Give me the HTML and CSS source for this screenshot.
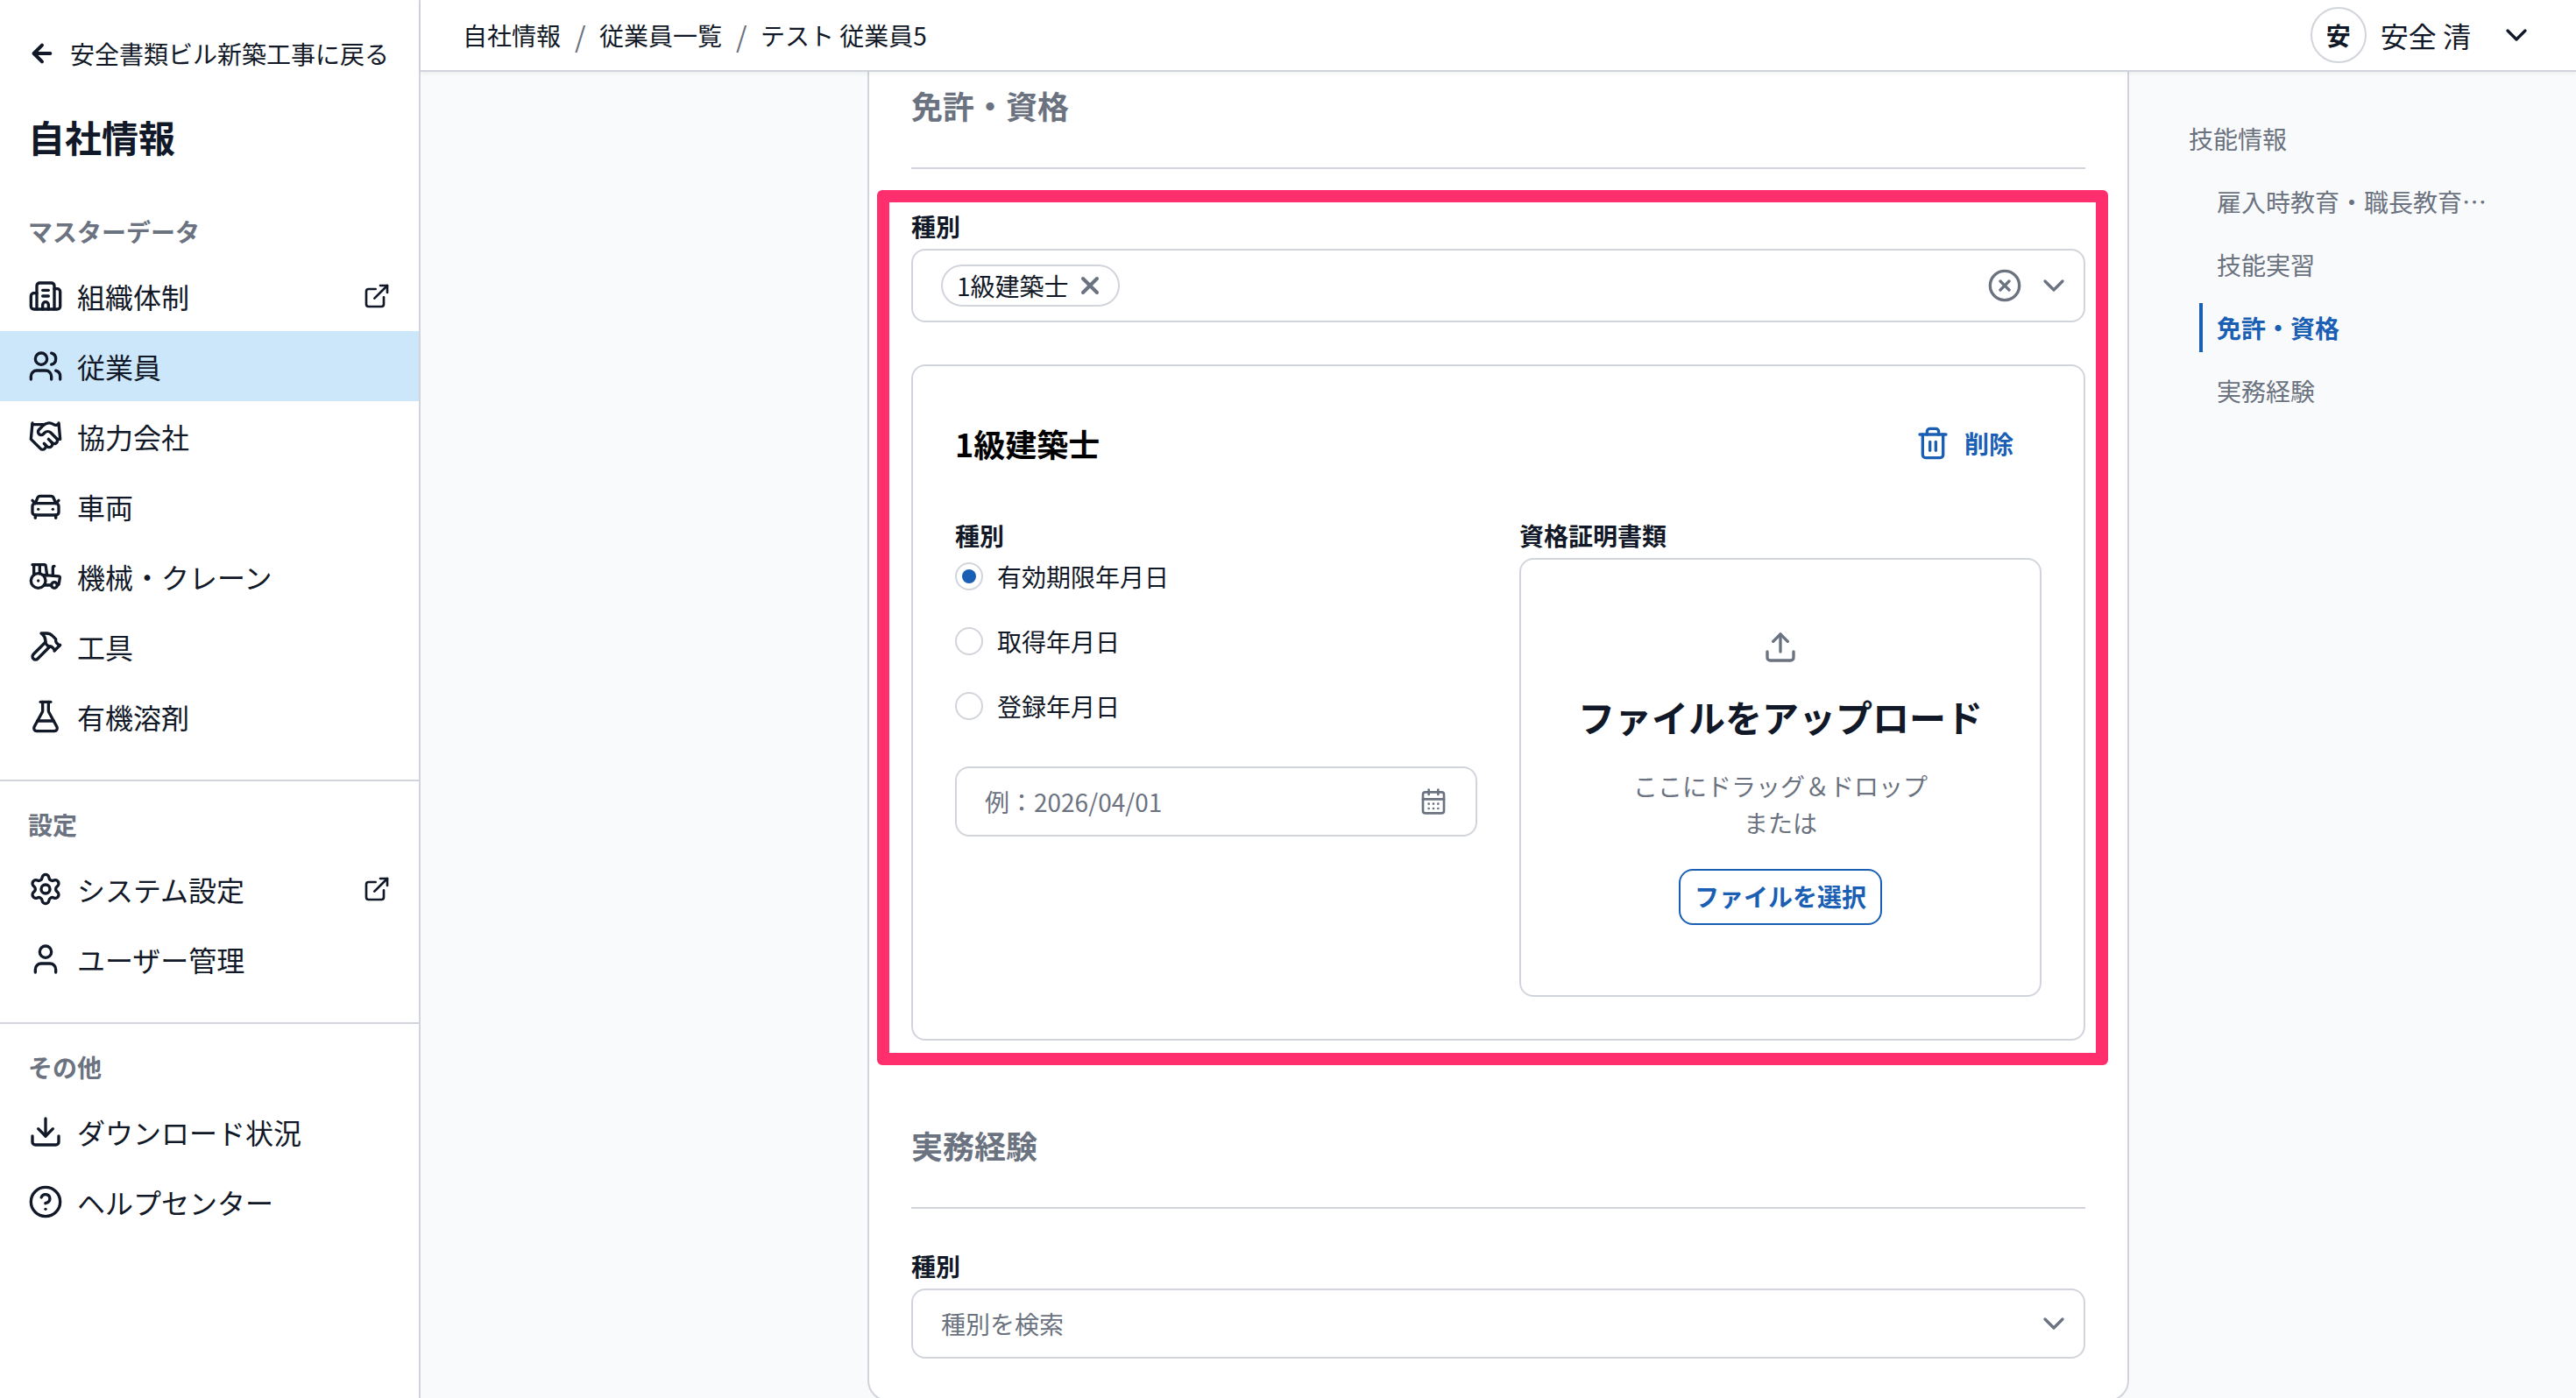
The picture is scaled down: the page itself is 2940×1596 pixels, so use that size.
FILE: index.html
```html
<!DOCTYPE html>
<html lang="ja">
<head>
  <meta charset="UTF-8">
  <meta name="viewport" content="width=device-width, initial-scale=1.0">
  <title>テスト 従業員5 | 自社情報</title>
  <link rel="stylesheet" href="styles.css">
</head>
<body>
  <nav class="sidebar">
    <div class="sidebar-head">
      <a class="back-link">
        <svg class="icon icon-sm icon-bold" viewBox="0 0 24 24"><path d="m12 19-7-7 7-7"/><path d="M19 12H5"/></svg>
        <span>安全書類ビル新築工事に戻る</span>
      </a>
      <h1>自社情報</h1>
    </div>

    <div class="menu-group">
      <p class="menu-label">マスターデータ</p>
      <a class="menu-item">
        <svg class="icon" viewBox="0 0 24 24"><path d="M10 12h4"/><path d="M10 8h4"/><path d="M14 21v-3a2 2 0 0 0-4 0v3"/><path d="M6 10H4a2 2 0 0 0-2 2v7a2 2 0 0 0 2 2h16a2 2 0 0 0 2-2V9a2 2 0 0 0-2-2h-2"/><path d="M6 21V5a2 2 0 0 1 2-2h8a2 2 0 0 1 2 2v16"/></svg>
        <span>組織体制</span>
        <svg class="icon icon-sm external" viewBox="0 0 24 24"><path d="M15 3h6v6"/><path d="M10 14 21 3"/><path d="M18 13v6a2 2 0 0 1-2 2H5a2 2 0 0 1-2-2V8a2 2 0 0 1 2-2h6"/></svg>
      </a>
      <a class="menu-item active">
        <svg class="icon" viewBox="0 0 24 24"><path d="M16 21v-2a4 4 0 0 0-4-4H6a4 4 0 0 0-4 4v2"/><path d="M16 3.128a4 4 0 0 1 0 7.744"/><path d="M22 21v-2a4 4 0 0 0-3-3.87"/><circle cx="9" cy="7" r="4"/></svg>
        <span>従業員</span>
      </a>
      <a class="menu-item">
        <svg class="icon" viewBox="0 0 24 24"><path d="m11 17 2 2a1 1 0 1 0 3-3"/><path d="m14 14 2.5 2.5a1 1 0 1 0 3-3l-3.88-3.88a3 3 0 0 0-4.24 0l-.88.88a1 1 0 1 1-3-3l2.81-2.81a5.79 5.79 0 0 1 7.06-.87l.47.28a2 2 0 0 0 1.42.25L21 4"/><path d="m21 3 1 11h-2"/><path d="M3 3 2 14l6.5 6.5a1 1 0 1 0 3-3"/><path d="M3 4h8"/></svg>
        <span>協力会社</span>
      </a>
      <a class="menu-item">
        <svg class="icon" viewBox="0 0 24 24"><path d="m21 8-2 2-1.5-3.7A2 2 0 0 0 15.646 5H8.4a2 2 0 0 0-1.903 1.257L5 10 3 8"/><path d="M7 14h.01"/><path d="M17 14h.01"/><rect width="18" height="8" x="3" y="10" rx="2"/><path d="M5 18v2"/><path d="M19 18v2"/></svg>
        <span>車両</span>
      </a>
      <a class="menu-item">
        <svg class="icon" viewBox="0 0 24 24"><path d="m10 11 11 .9a1 1 0 0 1 .8 1.1l-.665 4.158a1 1 0 0 1-.988.842H20"/><path d="M16 18h-5"/><path d="M18 5a1 1 0 0 0-1 1v5.573"/><path d="M3 4h8.129a1 1 0 0 1 .99.863L13 11.246"/><path d="M4 11V4"/><path d="M7 15h.01"/><path d="M8 10.1V4"/><circle cx="18" cy="18" r="2"/><circle cx="7" cy="15" r="5"/></svg>
        <span>機械・クレーン</span>
      </a>
      <a class="menu-item">
        <svg class="icon" viewBox="0 0 24 24"><path d="m15 12-8.373 8.373a1 1 0 1 1-3-3L12 9"/><path d="m18 15 4-4"/><path d="m21.5 11.5-1.914-1.914A2 2 0 0 1 19 8.172V7l-2.26-2.26a6 6 0 0 0-4.202-1.756L9 2.96l.92.82A6.18 6.18 0 0 1 12 8.4V10l2 2h1.172a2 2 0 0 1 1.414.586L18.5 14.5"/></svg>
        <span>工具</span>
      </a>
      <a class="menu-item">
        <svg class="icon" viewBox="0 0 24 24"><path d="M14 2v6a2 2 0 0 0 .245.96l5.51 10.08A2 2 0 0 1 18 22H6a2 2 0 0 1-1.755-2.96l5.51-10.08A2 2 0 0 0 10 8V2"/><path d="M6.453 15h11.094"/><path d="M8.5 2h7"/></svg>
        <span>有機溶剤</span>
      </a>
    </div>

    <div class="menu-group">
      <p class="menu-label">設定</p>
      <a class="menu-item">
        <svg class="icon" viewBox="0 0 24 24"><path d="M9.671 4.136a2.34 2.34 0 0 1 4.659 0 2.34 2.34 0 0 0 3.319 1.915 2.34 2.34 0 0 1 2.33 4.033 2.34 2.34 0 0 0 0 3.831 2.34 2.34 0 0 1-2.33 4.033 2.34 2.34 0 0 0-3.319 1.915 2.34 2.34 0 0 1-4.659 0 2.34 2.34 0 0 0-3.32-1.915 2.34 2.34 0 0 1-2.33-4.033 2.34 2.34 0 0 0 0-3.831A2.34 2.34 0 0 1 6.35 6.051a2.34 2.34 0 0 0 3.319-1.915"/><circle cx="12" cy="12" r="3"/></svg>
        <span>システム設定</span>
        <svg class="icon icon-sm external" viewBox="0 0 24 24"><path d="M15 3h6v6"/><path d="M10 14 21 3"/><path d="M18 13v6a2 2 0 0 1-2 2H5a2 2 0 0 1-2-2V8a2 2 0 0 1 2-2h6"/></svg>
      </a>
      <a class="menu-item">
        <svg class="icon" viewBox="0 0 24 24"><path d="M19 21v-2a4 4 0 0 0-4-4H9a4 4 0 0 0-4 4v2"/><circle cx="12" cy="7" r="4"/></svg>
        <span>ユーザー管理</span>
      </a>
    </div>

    <div class="menu-group">
      <p class="menu-label">その他</p>
      <a class="menu-item">
        <svg class="icon" viewBox="0 0 24 24"><path d="M12 15V3"/><path d="M21 15v4a2 2 0 0 1-2 2H5a2 2 0 0 1-2-2v-4"/><path d="m7 10 5 5 5-5"/></svg>
        <span>ダウンロード状況</span>
      </a>
      <a class="menu-item">
        <svg class="icon" viewBox="0 0 24 24"><circle cx="12" cy="12" r="10"/><path d="M9.09 9a3 3 0 0 1 5.83 1c0 2-3 3-3 3"/><path d="M12 17h.01"/></svg>
        <span>ヘルプセンター</span>
      </a>
    </div>
  </nav>

  <div class="page">
    <header class="topbar">
      <div class="breadcrumb">
        <a>自社情報</a>
        <span class="slash">/</span>
        <a>従業員一覧</a>
        <span class="slash">/</span>
        <span>テスト 従業員5</span>
      </div>
      <div class="account">
        <span class="avatar">安</span>
        <span class="account-name">安全 清</span>
        <svg class="icon" viewBox="0 0 24 24"><path d="m6 9 6 6 6-6"/></svg>
      </div>
    </header>

    <div class="content">
      <main class="card">
        <h2>免許・資格</h2>
        <section class="license">
          <label class="field-label">種別</label>
          <div class="select select-multi">
            <span class="chip">1級建築士
              <svg class="icon icon-sm icon-bold" viewBox="0 0 24 24"><path d="M18 6 6 18"/><path d="m6 6 12 12"/></svg>
            </span>
            <div class="select-actions">
              <svg class="icon" viewBox="0 0 24 24"><circle cx="12" cy="12" r="10"/><path d="m15 9-6 6"/><path d="m9 9 6 6"/></svg>
              <svg class="icon" viewBox="0 0 24 24"><path d="m6 9 6 6 6-6"/></svg>
            </div>
          </div>

          <div class="license-card">
            <div class="license-head">
              <h3>1級建築士</h3>
              <button class="delete-button">
                <svg class="icon" viewBox="0 0 24 24"><path d="M3 6h18"/><path d="M19 6v14a2 2 0 0 1-2 2H7a2 2 0 0 1-2-2V6"/><path d="M8 6V4a2 2 0 0 1 2-2h4a2 2 0 0 1 2 2v2"/><path d="M10 11v6"/><path d="M14 11v6"/></svg>
                削除
              </button>
            </div>
            <div class="license-body">
              <div>
                <label class="field-label">種別</label>
                <div class="radio-list">
                  <label class="radio checked"><i></i>有効期限年月日</label>
                  <label class="radio"><i></i>取得年月日</label>
                  <label class="radio"><i></i>登録年月日</label>
                </div>
                <div class="date-input">
                  <span>例：2026/04/01</span>
                  <svg class="icon icon-sm" viewBox="0 0 24 24"><path d="M8 2v4"/><path d="M16 2v4"/><rect width="18" height="18" x="3" y="4" rx="2"/><path d="M3 10h18"/><path d="M8 14h.01"/><path d="M12 14h.01"/><path d="M16 14h.01"/><path d="M8 18h.01"/><path d="M12 18h.01"/><path d="M16 18h.01"/></svg>
                </div>
              </div>
              <div>
                <label class="field-label">資格証明書類</label>
                <div class="upload">
                  <svg class="icon" viewBox="0 0 24 24"><path d="M12 3v12"/><path d="m17 8-5-5-5 5"/><path d="M21 15v4a2 2 0 0 1-2 2H5a2 2 0 0 1-2-2v-4"/></svg>
                  <h4>ファイルをアップロード</h4>
                  <p>ここにドラッグ＆ドロップ<br>または</p>
                  <button class="file-button">ファイルを選択</button>
                </div>
              </div>
            </div>
          </div>
          <div class="highlight"></div>
        </section>

        <h2>実務経験</h2>
        <section>
          <label class="field-label">種別</label>
          <div class="select">
            <span>種別を検索</span>
            <div class="select-actions">
              <svg class="icon" viewBox="0 0 24 24"><path d="m6 9 6 6 6-6"/></svg>
            </div>
          </div>
        </section>
      </main>

      <aside class="toc">
        <a>技能情報</a>
        <a class="sub">雇入時教育・職長教育…</a>
        <a class="sub">技能実習</a>
        <a class="sub current">免許・資格</a>
        <a class="sub">実務経験</a>
      </aside>
    </div>
  </div>
</body>
</html>
```
FILE: styles.css
```css
* {
  box-sizing: border-box;
}
body {
  display: flex;
  height: 1596px;
  margin: 0;
  overflow: hidden;
  font-family: "Noto Sans CJK JP", sans-serif;
  font-size: 28px;
  line-height: 42px;
  color: #111827;
  background-color: #f9fafb;
}
h1, h2, h3, h4, p {
  margin: 0;
}
button {
  font: inherit;
  font-weight: 700;
  color: #1a5fb4;
  background: none;
  border: none;
  cursor: pointer;
}
.icon {
  flex: none;
  display: block;
  width: 40px;
  height: 40px;
  fill: none;
  stroke: currentColor;
  stroke-width: 2;
  stroke-linecap: round;
  stroke-linejoin: round;
}
.icon-sm {
  width: 32px;
  height: 32px;
}
.icon-bold {
  stroke-width: 3;
}

/* sidebar */
.sidebar {
  flex: none;
  width: 480px;
  background-color: #fff;
  border-right: 2px solid #d1d5db;
}
.sidebar-head {
  height: 215px;
  padding: 40px 32px 0;
}
.back-link {
  display: flex;
  align-items: center;
  gap: 16px;
  white-space: nowrap;
}
.sidebar-head h1 {
  margin-top: 43px;
  font-size: 42px;
  line-height: 62px;
}
.menu-group {
  padding: 28px 0 32px;
}
.menu-group + .menu-group {
  border-top: 2px solid #d1d5db;
}
.menu-label {
  margin-bottom: 13px;
  padding: 0 32px;
  font-weight: 700;
  color: #6b7280;
}
.menu-item {
  display: flex;
  align-items: center;
  gap: 16px;
  height: 80px;
  padding: 0 32px;
  font-size: 32px;
}
.menu-item.active {
  background-color: #cce7fa;
}
.external {
  margin-left: auto;
}

/* top bar */
.page {
  flex: 1;
  min-width: 0;
}
.topbar {
  position: relative;
  display: flex;
  align-items: center;
  justify-content: space-between;
  height: 82px;
  padding: 0 48px;
  background-color: #fff;
  border-bottom: 2px solid #d1d5db;
  box-shadow: 0 2px 4px rgba(0, 0, 0, 0.05);
}
.breadcrumb {
  display: flex;
  align-items: center;
  gap: 16px;
}
.slash {
  width: 12px;
  font-size: 32px;
  color: #6b7280;
}
.account {
  display: flex;
  align-items: center;
  gap: 16px;
}
.avatar {
  width: 64px;
  height: 64px;
  border: 2px solid #d1d5db;
  border-radius: 50%;
  font-weight: 700;
  line-height: 60px;
  text-align: center;
}
.account-name {
  margin-right: 16px;
  font-size: 32px;
}

/* form */
.content {
  display: grid;
  grid-template-columns: 1fr 1440px 1fr;
}
.card {
  grid-column: 2;
  height: 1518px;
  padding: 11px 48px 0;
  background-color: #fff;
  border: 2px solid #d1d5db;
  border-top: none;
  border-radius: 0 0 24px 24px;
}
.card h2 {
  margin-bottom: 39px;
  padding-bottom: 44px;
  border-bottom: 2px solid #d1d5db;
  font-size: 36px;
  line-height: 54px;
  color: #6b7280;
}
.field-label {
  display: block;
  font-weight: 700;
  line-height: 52px;
}
.select {
  display: flex;
  align-items: center;
  justify-content: space-between;
  height: 80px;
  padding: 0 14px 0 32px;
  border: 2px solid #d1d5db;
  border-radius: 16px;
  color: #6b7280;
}
.select-multi {
  height: 84px;
}
.select-actions {
  display: flex;
  gap: 16px;
}
.chip {
  display: flex;
  align-items: center;
  gap: 8px;
  height: 48px;
  padding: 0 16px;
  border: 2px solid #d1d5db;
  border-radius: 24px;
  color: #111827;
}
.chip .icon {
  color: #6b7280;
}
.license {
  position: relative;
  margin-bottom: 92px;
}
.license-card {
  height: 772px;
  margin-top: 48px;
  padding: 56px 48px 0;
  border: 2px solid #d1d5db;
  border-radius: 16px;
}
.license-head {
  display: flex;
  align-items: center;
  justify-content: space-between;
  height: 64px;
  margin-bottom: 47px;
}
.license-head h3 {
  font-size: 36px;
  color: #000;
}
.delete-button {
  display: flex;
  align-items: center;
  gap: 16px;
  padding: 0 32px;
}
.license-body {
  display: grid;
  grid-template-columns: 1fr 1fr;
  gap: 48px;
}
.radio-list {
  display: flex;
  flex-direction: column;
  gap: 42px;
  padding: 5px 0 53px;
}
.radio {
  display: flex;
  align-items: center;
  gap: 16px;
  height: 32px;
}
.radio i {
  display: flex;
  align-items: center;
  justify-content: center;
  width: 32px;
  height: 32px;
  border: 2px solid #d1d5db;
  border-radius: 50%;
}
.radio.checked i::after {
  content: "";
  width: 16px;
  height: 16px;
  border-radius: 50%;
  background-color: #1a5fb4;
}
.date-input {
  display: flex;
  align-items: center;
  justify-content: space-between;
  height: 80px;
  padding: 0 32px;
  border: 2px solid #d1d5db;
  border-radius: 16px;
  color: #6b7280;
}
.upload {
  display: flex;
  flex-direction: column;
  align-items: center;
  height: 501px;
  padding-top: 80px;
  border: 2px solid #d1d5db;
  border-radius: 16px;
  color: #6b7280;
  text-align: center;
}
.upload h4 {
  margin: 28px 0 27px;
  font-size: 42px;
  line-height: 62px;
  color: #111827;
}
.file-button {
  width: 232px;
  height: 64px;
  margin-top: 32px;
  padding: 0 0 2px;
  border: 2px solid #1a5fb4;
  border-radius: 16px;
}
/* frame drawn over the section */
.highlight {
  position: absolute;
  top: -15px;
  right: -26px;
  bottom: -28px;
  left: -39px;
  border: 14px solid #ff2e6c;
  border-radius: 6px;
}

/* table of contents */
.toc {
  display: flex;
  flex-direction: column;
  gap: 16px;
  padding: 48px 0 0 68px;
  color: #6b7280;
}
.toc a {
  line-height: 56px;
}
.toc .sub {
  margin-left: 12px;
  padding-left: 16px;
  border-left: 4px solid transparent;
}
.toc .current {
  border-left-color: #1a5fb4;
  font-weight: 700;
  color: #1a5fb4;
}
```
